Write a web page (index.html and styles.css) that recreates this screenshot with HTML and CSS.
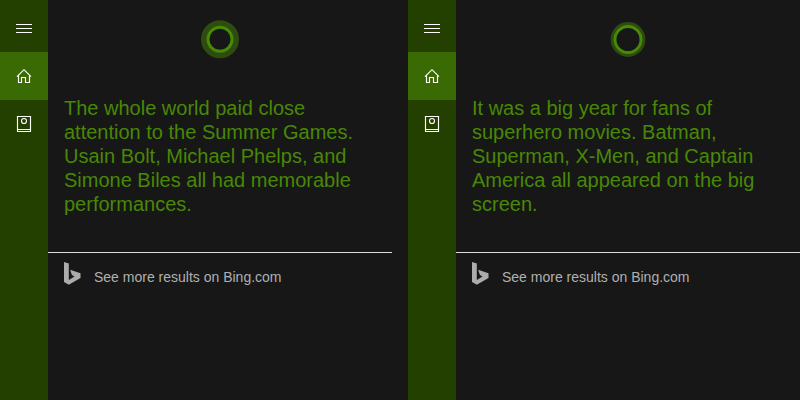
FILE: index.html
```html
<!DOCTYPE html>
<html lang="en">
<head>
  <meta charset="UTF-8">
  <title>Cortana</title>
  <link rel="stylesheet" href="styles.css">
</head>
<body>
<div class="panel">
  <nav class="sidebar">
    <a class="item menu"><svg width="16" height="16" viewBox="0 0 16 16"><path d="M0 4.5h16M0 8.5h16M0 12.5h16"/></svg></a>
    <a class="item active"><svg width="16" height="16" viewBox="0 0 16 16"><path d="M1 8.600L8 1.700l7 6.900M2.500 7.500v7h3v-5h4v5h4v-7"/></svg></a>
    <a class="item"><svg width="16" height="16" viewBox="0 0 16 16"><path d="M1.5.5h13v15h-13zM1.5 13.5h13"/><circle cx="8" cy="5" r="2.5"/></svg></a>
  </nav>
  <main class="content">
    <svg class="logo" width="40" height="40" viewBox="0 0 40 40">
      <circle class="halo" cx="20" cy="19.3" r="15.2" stroke-width="7.6"/>
      <circle class="ring" cx="20" cy="19.3" r="12" stroke-width="2.9"/>
    </svg>
    <p class="answer">The whole world paid close<br>attention to the Summer Games.<br>Usain Bolt, Michael Phelps, and<br>Simone Biles all had memorable<br>performances.</p>
    <a class="more">
      <svg width="17" height="24" viewBox="0 0 17 24"><path d="M0 0l4.800 1.500v16.500l5.700-3.600-2.600-1.400-1.800-5.200L16.500 11.200v4.800L4.800 22.700 0 20z"/></svg>
      <span>See more results on Bing.com</span>
    </a>
  </main>
</div>
<div class="panel">
  <nav class="sidebar">
    <a class="item menu"><svg width="16" height="16" viewBox="0 0 16 16"><path d="M0 4.5h16M0 8.5h16M0 12.5h16"/></svg></a>
    <a class="item active"><svg width="16" height="16" viewBox="0 0 16 16"><path d="M1 8.600L8 1.700l7 6.900M2.500 7.500v7h3v-5h4v5h4v-7"/></svg></a>
    <a class="item"><svg width="16" height="16" viewBox="0 0 16 16"><path d="M1.5.5h13v15h-13zM1.5 13.5h13"/><circle cx="8" cy="5" r="2.5"/></svg></a>
  </nav>
  <main class="content">
    <svg class="logo" width="40" height="40" viewBox="0 0 40 40">
      <circle class="halo" cx="20" cy="19.5" r="15" stroke-width="4.8"/>
      <circle class="ring" cx="20" cy="19.5" r="13" stroke-width="2.9"/>
    </svg>
    <p class="answer">It was a big year for fans of<br>superhero movies. Batman,<br>Superman, X-Men, and Captain<br>America all appeared on the big<br>screen.</p>
    <a class="more">
      <svg width="17" height="24" viewBox="0 0 17 24"><path d="M0 0l4.800 1.500v16.500l5.700-3.600-2.600-1.400-1.800-5.200L16.500 11.200v4.800L4.800 22.700 0 20z"/></svg>
      <span>See more results on Bing.com</span>
    </a>
  </main>
</div>
</body>
</html>
```
FILE: styles.css
```css
body {
  margin: 0;
  display: flex;
  gap: 16px;
  width: 800px;
  height: 400px;
  overflow: hidden;
  background: #171717;
  font-family: "Liberation Sans", Arial, sans-serif;
}
.panel {
  display: flex;
  width: 392px;
  height: 400px;
}
.sidebar {
  width: 48px;
  padding-top: 4px;
  box-sizing: border-box;
  background: #244000;
}
.item {
  display: flex;
  align-items: center;
  justify-content: center;
  height: 48px;
}
.item svg {
  fill: none;
  stroke: #fff;
  stroke-width: 1.15;
}
.item.menu svg {
  stroke-width: 1;
}
.item.active {
  background: #3a6a04;
}
.content {
  width: 344px;
}
.logo {
  display: block;
  margin: 20px auto 0;
  fill: none;
}
.halo {
  stroke: #2e4b10;
}
.ring {
  stroke: #478a05;
}
.answer {
  margin: 36px 0 0;
  padding-left: 16px;
  font-size: 20px;
  line-height: 24px;
  color: #488806;
  white-space: nowrap;
}
.more {
  display: flex;
  gap: 13px;
  margin-top: 36px;
  padding: 9px 0 0 16px;
  border-top: 1px solid #dcdcdc;
  font-size: 14px;
  line-height: 16px;
  color: #b0b0b0;
}
.more svg {
  fill: #acacac;
}
.more span {
  padding-top: 7px;
}
```
